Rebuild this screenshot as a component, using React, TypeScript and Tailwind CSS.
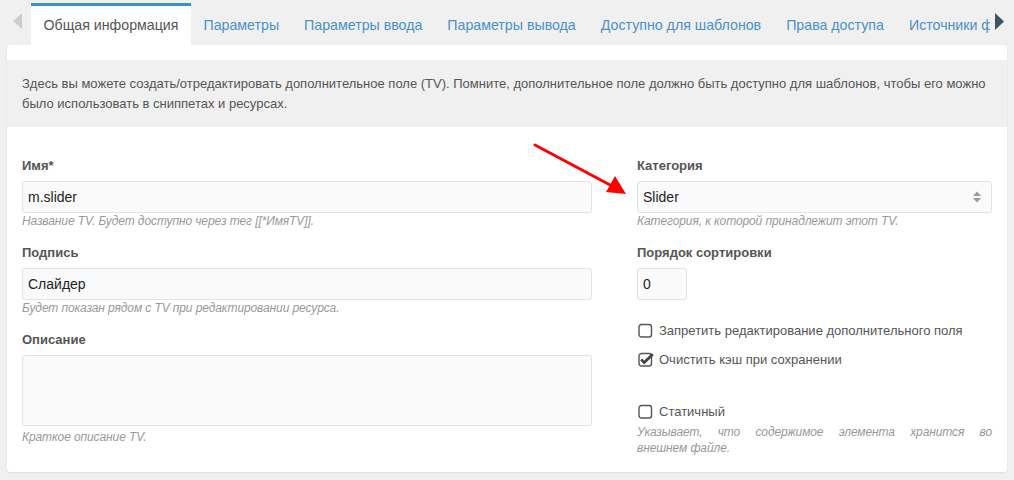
import React from "react";

const tabs = [
  "Общая информация",
  "Параметры",
  "Параметры ввода",
  "Параметры вывода",
  "Доступно для шаблонов",
  "Права доступа",
  "Источники файлов",
];

function Label({ children }: { children: React.ReactNode }) {
  return <div className="mb-[6px] text-[13px] leading-[18px] font-bold text-[#555]">{children}</div>;
}

function Help({ children, className = "" }: { children: React.ReactNode; className?: string }) {
  return <div className={`text-[12px] leading-[16px] tracking-[-0.1px] italic text-[#999] ${className}`}>{children}</div>;
}

function TextInput({ value, className = "" }: { value: string; className?: string }) {
  return (
    <div
      className={`flex h-[32px] items-center rounded-[3px] border border-[#e4e4e4] bg-[#fafafa] pl-[5px] text-[14px] text-[#222] ${className}`}
    >
      {value}
    </div>
  );
}

function Checkbox({ checked, label, className = "" }: { checked?: boolean; label: string; className?: string }) {
  return (
    <div className={`flex h-[20px] items-center gap-[5px] text-[13px] text-[#555] ${className}`}>
      <svg width="16" height="16" viewBox="0 0 16 16" className="ml-[1px] shrink-0">
        <rect x="1" y="1.5" width="12.5" height="12.5" rx="2.5" fill="none" stroke="#555" strokeWidth="1.4" />
        {checked && <path d="M3.2 7.4 L6.2 10.6 L14.8 2.2" fill="none" stroke="#444" strokeWidth="2.8" strokeLinejoin="miter" />}
      </svg>
      <span>{label}</span>
    </div>
  );
}

export default function App() {
  return (
    <div className="relative h-[480px] w-[1014px] overflow-hidden bg-[#f0f0f0]" style={{ fontFamily: '"Liberation Sans", Arial, sans-serif' }}>
      {/* tab strip */}
      <div className="flex h-[45px] items-end">
        <div className="flex w-[31px] items-center justify-center self-stretch pb-[3px]">
          <svg width="10" height="16" viewBox="0 0 10 16" className="ml-[4px]">
            <path d="M9 0 L0 8 L9 16 Z" fill="#c9cdd1" />
          </svg>
        </div>
        <div className="flex h-[42px] w-[959px] overflow-hidden">
          {tabs.map((t, i) => (
            <div
              key={t}
              className={`flex shrink-0 items-center whitespace-nowrap border-t-[3px] px-[12.5px] text-[14.2px] ${
                i === 0 ? "border-[#3693cc] bg-white text-[#555]" : "border-transparent text-[#4a90cc]"
              }`}
            >
              {t}
            </div>
          ))}
        </div>
        <div className="flex flex-1 items-center justify-start self-stretch pb-[3px] pl-[5px]">
          <svg width="9" height="17" viewBox="0 0 9 17">
            <path d="M0 0 L9 8.5 L0 17 Z" fill="#3e5466" />
          </svg>
        </div>
      </div>

      {/* panel */}
      <div className="ml-[7px] w-[1000px] rounded-[3px] bg-white pt-[15px] pb-[16px] shadow-[0_1px_2px_rgba(0,0,0,0.08)]">
        <div className="bg-[#f0f0f0] px-[15px] pt-[14px] pb-[13px] text-[13px] leading-[20px] text-[#555]">
          Здесь вы можете создать/отредактировать дополнительное поле (TV). Помните, дополнительное поле должно быть доступно для шаблонов, чтобы его можно было использовать в сниппетах и ресурсах.
        </div>

        <div className="flex gap-[45px] px-[15px] pt-[30px]">
          <div className="flex w-[570px] flex-col">
            <Label>Имя*</Label>
            <TextInput value="m.slider" />
            <Help>Название TV. Будет доступно через тег [[*ИмяTV]].</Help>

            <div className="mt-[15px]">
              <Label>Подпись</Label>
              <TextInput value="Слайдер" />
              <Help>Будет показан рядом с TV при редактировании ресурса.</Help>
            </div>

            <div className="mt-[15px]">
              <Label>Описание</Label>
              <div className="h-[71px] rounded-[3px] border border-[#e4e4e4] bg-[#fafafa]" />
              <Help className="mt-[3px]">Краткое описание TV.</Help>
            </div>
          </div>

          <div className="flex w-[355px] flex-col">
            <Label>Категория</Label>
            <div className="relative">
              <TextInput value="Slider" />
              <svg width="10" height="14" viewBox="0 0 10 14" className="absolute right-[10px] top-[9px]">
                <path d="M1 6 L5 1.5 L9 6 Z" fill="#9a9a9a" />
                <path d="M1 8 L5 12.5 L9 8 Z" fill="#9a9a9a" />
              </svg>
            </div>
            <Help>Категория, к которой принадлежит этот TV.</Help>

            <div className="mt-[15px]">
              <Label>Порядок сортировки</Label>
              <TextInput value="0" className="w-[50px]" />
            </div>

            <Checkbox label="Запретить редактирование дополнительного поля" className="mt-[21px]" />
            <Checkbox checked label="Очистить кэш при сохранении" className="mt-[9px]" />
            <Checkbox label="Статичный" className="mt-[32px]" />
            <Help className="mt-[2px]">
              <div className="text-justify [text-align-last:justify]">Указывает, что содержимое элемента хранится во</div>
              <div>внешнем файле.</div>
            </Help>
          </div>
        </div>
      </div>

      {/* red annotation arrow */}
      <svg width="1014" height="480" className="pointer-events-none absolute left-0 top-0">
        <line x1="535" y1="145" x2="612" y2="186" stroke="#ff0000" strokeWidth="3" strokeLinecap="round" />
        <path d="M626 194 L606 192 L615 176 Z" fill="#ff0000" />
      </svg>
    </div>
  );
}
